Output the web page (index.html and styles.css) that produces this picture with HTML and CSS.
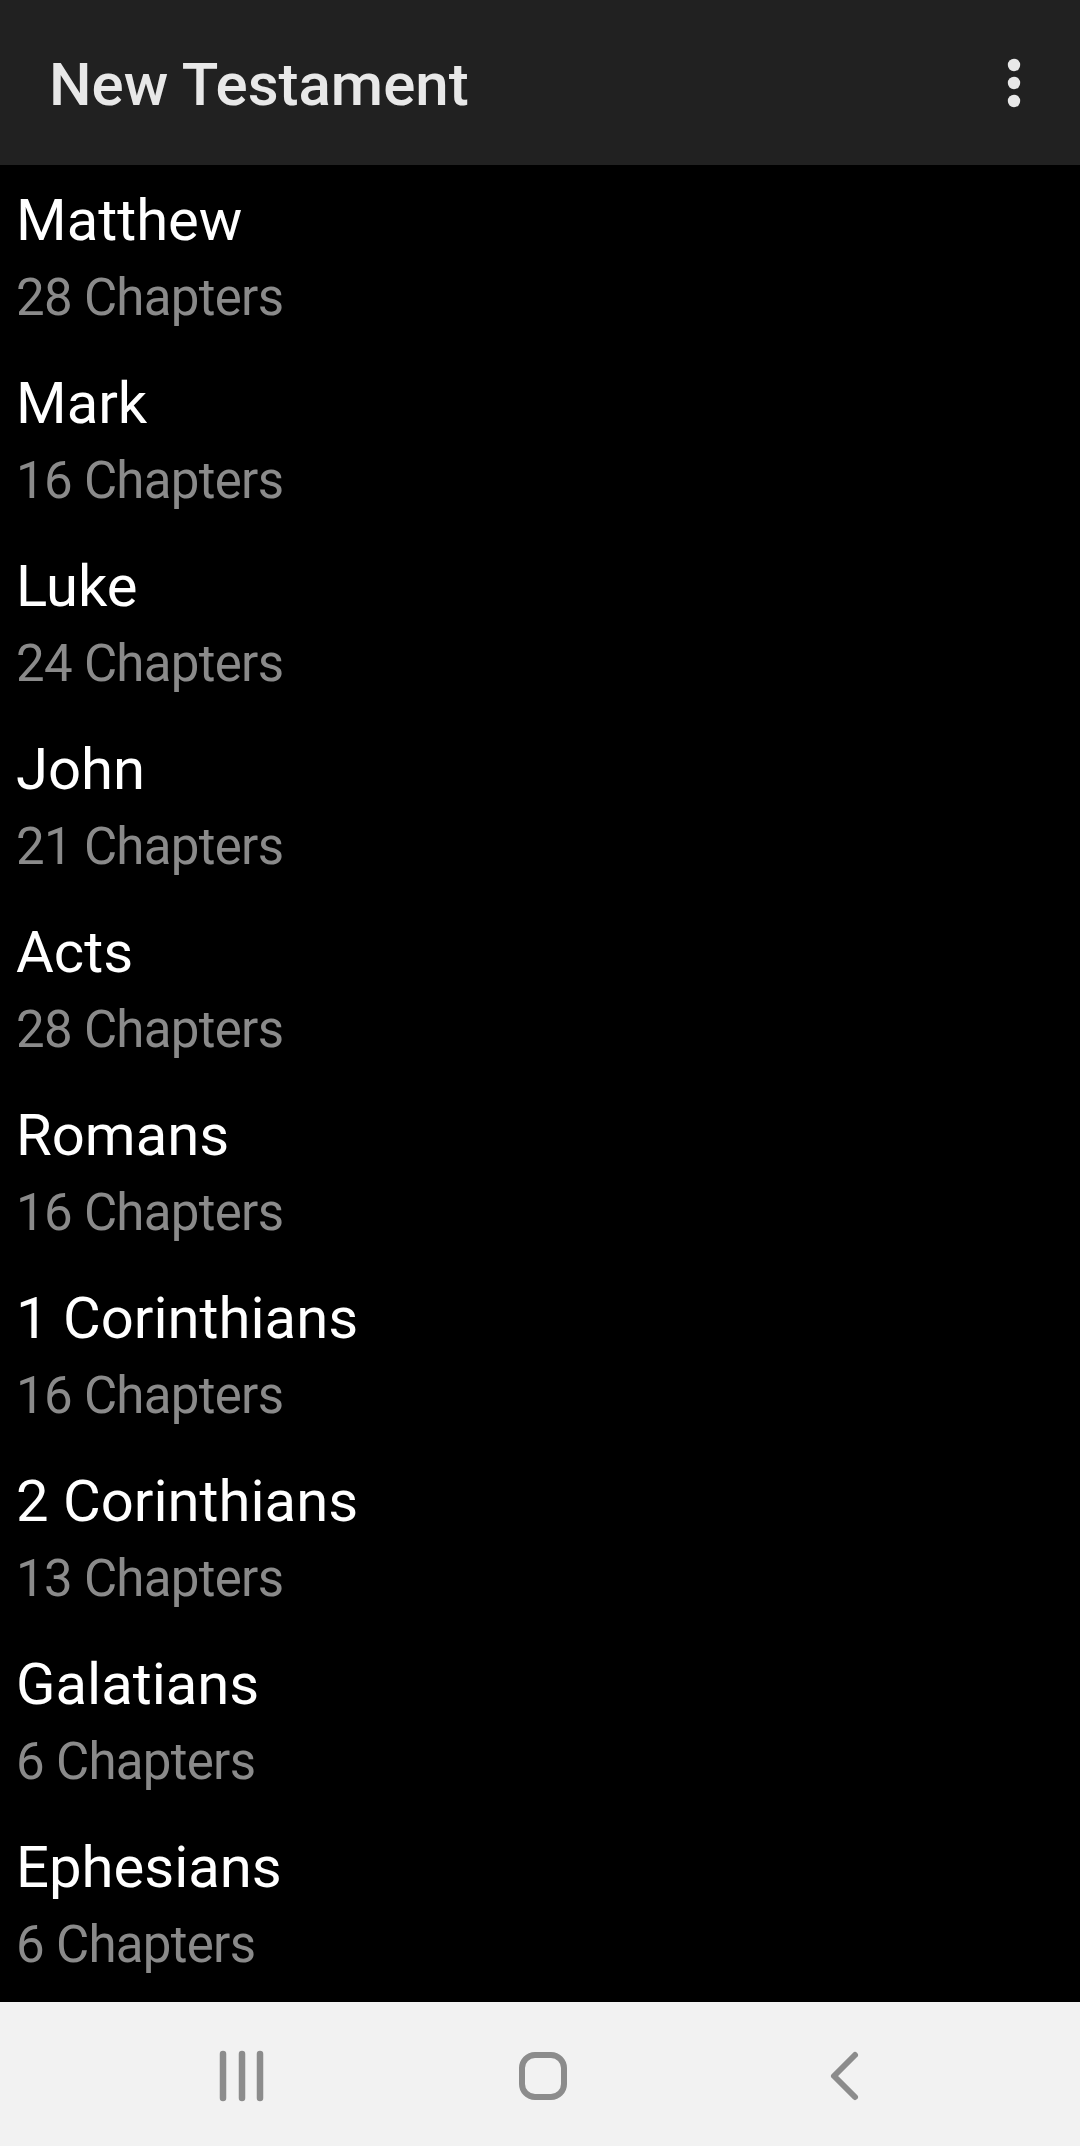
FILE: index.html
```html
<!DOCTYPE html>
<html>
<head>
<meta charset="utf-8">
<link rel="stylesheet" href="styles.css">
</head>
<body>
<div class="screen">
  <header class="appbar">
    <h1 class="title">New Testament</h1>
    <svg class="menu" width="24" height="60" viewBox="0 0 24 60">
      <circle cx="12" cy="12" r="6.2"/>
      <circle cx="12" cy="30" r="6.2"/>
      <circle cx="12" cy="48" r="6.2"/>
    </svg>
  </header>
  <ul class="books">
    <li class="book"><div class="name">Matthew</div><div class="count">28 Chapters</div></li>
    <li class="book"><div class="name">Mark</div><div class="count">16 Chapters</div></li>
    <li class="book"><div class="name">Luke</div><div class="count">24 Chapters</div></li>
    <li class="book"><div class="name">John</div><div class="count">21 Chapters</div></li>
    <li class="book"><div class="name">Acts</div><div class="count">28 Chapters</div></li>
    <li class="book"><div class="name">Romans</div><div class="count">16 Chapters</div></li>
    <li class="book"><div class="name">1 Corinthians</div><div class="count">16 Chapters</div></li>
    <li class="book"><div class="name">2 Corinthians</div><div class="count">13 Chapters</div></li>
    <li class="book"><div class="name">Galatians</div><div class="count">6 Chapters</div></li>
    <li class="book"><div class="name">Ephesians</div><div class="count">6 Chapters</div></li>
  </ul>
  <nav class="navbar">
    <div class="slot">
      <svg width="50" height="52" viewBox="0 0 50 52">
        <g stroke="#8c8c8c" stroke-width="6.5" stroke-linecap="round">
          <line x1="7" y1="4" x2="7" y2="48"/>
          <line x1="26" y1="4" x2="26" y2="48"/>
          <line x1="44" y1="4" x2="44" y2="48"/>
        </g>
      </svg>
    </div>
    <div class="slot">
      <svg width="52" height="52" viewBox="0 0 52 52">
        <rect x="6" y="5" width="42" height="42" rx="13" fill="none" stroke="#8c8c8c" stroke-width="6"/>
      </svg>
    </div>
    <div class="slot">
      <svg width="34" height="52" viewBox="0 0 34 52">
        <polyline points="29,5 8,26 29,47" fill="none" stroke="#8c8c8c" stroke-width="6" stroke-linecap="round" stroke-linejoin="round"/>
      </svg>
    </div>
  </nav>
</div>
</body>
</html>
```
FILE: styles.css
```css
html, body {
  margin: 0;
  padding: 0;
  background: #000;
}
.screen {
  width: 1080px;
  height: 2146px;
  display: flex;
  flex-direction: column;
  font-family: Roboto, "Noto Sans", sans-serif;
}
.appbar {
  height: 165px;
  flex: none;
  background: #212121;
  display: flex;
  align-items: center;
  justify-content: space-between;
  padding: 5px 54px 0 49px;
  box-sizing: border-box;
}
.title {
  margin: 0;
  font-size: 60px;
  line-height: 68px;
  font-weight: 500;
  color: #e8e8e8;
}
.menu {
  fill: #e8e8e8;
  margin-top: -5px;
}
.books {
  list-style: none;
  margin: 0;
  padding: 0;
  flex: 1;
  background: #000;
}
.book {
  height: 183px;
  box-sizing: border-box;
  padding: 21px 0 0 16px;
}
.name {
  font-size: 58px;
  line-height: 68px;
  color: #ffffff;
}
.count {
  margin-top: 13px;
  font-size: 51px;
  line-height: 61px;
  letter-spacing: -0.7px;
  color: #8a8a8a;
}
.navbar {
  height: 144px;
  flex: none;
  background: #f2f2f2;
  display: flex;
  justify-content: center;
  align-items: center;
  padding: 4px 0 0 3px;
  box-sizing: border-box;
}
.slot {
  width: 301px;
  display: flex;
  justify-content: center;
  align-items: center;
}
```
